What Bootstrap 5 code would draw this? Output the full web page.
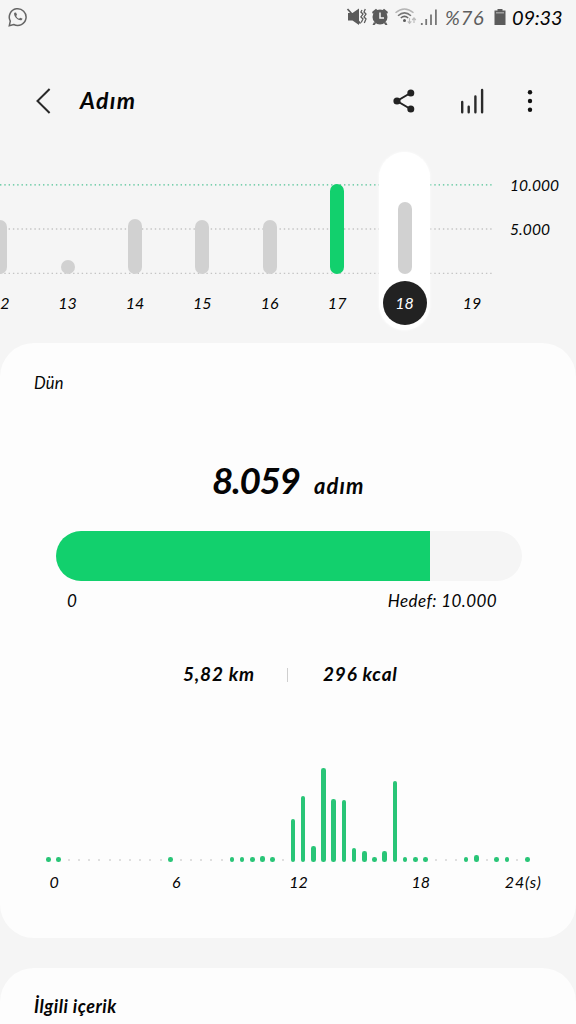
<!DOCTYPE html>
<html lang="tr">
<head>
    <meta charset="UTF-8">
    <meta name="viewport" content="width=device-width, initial-scale=1">
    <title>Adım</title>
    <link rel="stylesheet" href="https://cdn.jsdelivr.net/npm/bootstrap@5.3.0/dist/css/bootstrap.min.css">
    <style>
        body {
            background-color: #f5f5f5;
            color: #050505;
            font-family: Lato, "Open Sans", sans-serif;
            font-style: italic;
            font-size: 17px;
            line-height: 1;
            height: 1024px;
            overflow: hidden;
        }
        .status-bar { height: 36px; padding: 0 14px 3px 8px; color: #5e5e5e; font-size: 20px; }
        .status-bar .clock { color: #050505; letter-spacing: -.2px; width: 50px; margin-left: 6px; }
        .status-bar .battery-text { width: 43px; margin: 0 6px 0 3px; letter-spacing: .8px; }
        .top-bar { height: 60px; margin-top: 35px; padding: 0 32px 0 35px; }
        .top-bar h1 { font-size: 23px; font-weight: 700; margin-left: 29px; width: 64px; letter-spacing: 1.3px; }
        .icon-share { margin-right: 45px; }
        .icon-stats { margin-right: 31px; }

        .daily-chart { height: 212px; overflow: hidden; }
        .grid-lines { left: 0; top: 0; }
        .days { margin-left: -33.5px; width: 540px; }
        .day { width: 67.4px; height: 179px; margin-top: 21px; flex: none; }
        .day-inner { width: 51px; height: 178px; border-radius: 26px; }
        .day.selected .day-inner { background: #fff; box-shadow: 0 0 3px #fff; }
        .bar-area { height: 121.5px; }
        .day-bar { width: 14px; border-radius: 7px; background: #d1d1d1; }
        .day-bar.reached { background: #12d06d; }
        .day-label { width: 44px; height: 44px; margin-top: 7px; font-size: 16px; }
        .selected .day-label { background: #222; color: #fff; border-radius: 50%; }
        .scale { left: 510px; top: 46px; font-size: 15.5px; letter-spacing: .1px; line-height: 17px; }
        .scale div { margin-bottom: 27px; }

        .panel { background: #fdfdfd; border-radius: 34px; }
        .panel-today { height: 595px; padding-top: 32px; margin-bottom: 30px; }
        .panel-related { height: 56px; padding: 29px 34px 0; font-size: 18px; font-weight: 700; letter-spacing: .5px; border-radius: 34px 34px 0 0; }
        .panel-title { margin-left: 34px; font-size: 16.5px; height: 18px; letter-spacing: .2px; }
        .total { margin: 68px 0 0 212px; height: 46px; }
        .total-count { font-size: 37px; font-weight: 700; width: 102px; letter-spacing: -1.4px; }
        .total-unit { font-size: 22px; font-weight: 700; letter-spacing: 1.1px; }
        .goal { width: 466px; height: 50px; margin: 24px 0 0 56px; border-radius: 25px; background: #f5f5f5; }
        .goal .progress-bar { background: #12d06d; }
        .goal-labels { margin: 11px 79px 0 67px; height: 18px; letter-spacing: .4px; }
        .stats { margin: 54px 0 0 183px; height: 20px; font-size: 19px; font-weight: 700; letter-spacing: .8px; }
        .stats .distance { width: 104px; }
        .stats .divider { width: 1px; height: 14px; background: #cfcfcf; margin: 4px 35px 0 0; }
        .hours { height: 100px; margin: 78px 0 0 43.4px; width: 489.2px; }
        .slot { flex: 1 0 0; }
        .hour-bar { width: 4.6px; border-radius: 2.3px; background: #29c577; }
        .hour-bar.idle { width: 2px; height: 2px; background: #d4d4d4; margin-bottom: 1.4px; }
        .hour-labels { margin: 12px 0 0 -7px; font-size: 16px; }
        .hour-labels div { width: 122.2px; flex: none; }
        .hour-labels .end-label { width: 83px; letter-spacing: .8px; }
    </style>
</head>
<body>

<div class="status-bar d-flex align-items-center">
    <svg class="me-auto" width="20" height="20" viewBox="0 0 20 20" fill="none" stroke="#666" stroke-width="1.5">
        <path d="M1.3 18.7 2.3 14.1A8.4 8.4 0 1 1 5.7 17.5Z"/>
        <path d="M6.3 5.8C5 8.5 9.7 14.1 13.5 13.2L14.6 11.8 12.3 10.7 11 11.8C9.7 11.2 8.6 10 8.2 8.9L9 7.8 8 5.5Z" fill="#666" stroke="none"/>
    </svg>
    <svg width="96" height="20" viewBox="346 7 96 20">
        <g fill="#5b5b5b">
            <path d="M348 13H352.5L359 8.5V25L352.5 20.5H348Z"/>
            <path d="M347.5 9 360.5 23.5" stroke="#5b5b5b" stroke-width="1.7"/>
            <path d="M362 10 360.9 12 363 14 360.9 17 363 19 361.2 22.5M365.3 9 364 12 366 14 364 17 366 19 364.3 23" stroke="#5b5b5b" stroke-width="1.3" fill="none"/>
            <path d="M372 12 376 8.8 377.5 10.2 373 14.1ZM388 12 384 8.8 382.5 10.2 387 14.1ZM374 22 372.5 25H374.5L376 23.5ZM386 22 387.5 25H385.5L384 23.5Z"/>
            <circle cx="380" cy="17" r="7.5"/>
            <path d="M380 12.5V18H384" stroke="#f5f5f5" stroke-width="1.5" fill="none"/>
            <circle cx="404.5" cy="20.4" r="1.5"/>
        </g>
        <g fill="none" stroke-width="1.5">
            <path d="M395.5 12.8Q404.5 5.2 413.5 12.8" stroke="#b5b5b5"/>
            <path d="M398 15.7Q404.5 10 411 15.7" stroke="#777"/>
            <path d="M400.8 18Q404.5 14.7 408.2 18" stroke="#666"/>
            <path d="M409.5 18V23M407.7 21.3 409.5 23.3 411.3 21.3M414 23V18M412.2 20 414 18 415.8 20" stroke="#bcbcbc" stroke-width="1.2"/>
            <path d="M421.8 23V25M426.2 19V25M431 14.5V25M435.9 9.5V25" stroke="#777" stroke-width="1.8"/>
        </g>
    </svg>
    <span class="battery-text">%76</span>
    <svg width="12" height="18" viewBox="0 0 12 18">
        <path d="M3.5 1H8.5V2.5H11.5V17H.5V2.5H3.5Z" fill="#5b5b5b"/>
        <path d="M2 4.8H10" stroke="#aaa" stroke-width="1.3"/>
    </svg>
    <span class="clock">09:33</span>
</div>

<header class="top-bar d-flex align-items-center">
    <svg width="16" height="28" viewBox="0 0 16 28" fill="none" stroke="#292929" stroke-width="2">
        <path d="M14.6 2 2.5 14 14.6 26"/>
    </svg>
    <h1 class="mb-0 me-auto">Adım</h1>
    <svg class="icon-share" width="22" height="24" viewBox="0 0 22 24" fill="#222">
        <path d="M17.5 4 4 12 17.5 20" fill="none" stroke="#222" stroke-width="2"/>
        <circle cx="4" cy="12" r="3.6"/><circle cx="17.8" cy="4" r="3.5"/><circle cx="17.8" cy="20" r="3.5"/>
    </svg>
    <svg class="icon-stats" width="25" height="26" viewBox="0 0 25 26" stroke="#2a2a2a" stroke-width="2.4" stroke-linecap="round">
        <path d="M2.2 14V24.2M8.7 18.7V24.2M15.4 8.4V24.2M22.1 2V24.2"/>
    </svg>
    <svg width="28" height="26" viewBox="0 0 28 26" fill="#111">
        <circle cx="14" cy="4.3" r="2.2"/><circle cx="14" cy="13" r="2.2"/><circle cx="14" cy="21.7" r="2.2"/>
    </svg>
</header>

<section class="daily-chart position-relative">
    <svg class="grid-lines position-absolute" width="494" height="150" stroke-width="1.3" stroke-dasharray="1.4 2.9">
        <path d="M0 53.8H494" stroke="#4fc294"/>
        <path d="M0 98H494M0 142.3H494" stroke="#c4c4c4"/>
    </svg>
    <div id="days" class="days d-flex position-relative"></div>
    <div class="scale position-absolute">
        <div>10.000</div>
        <div>5.000</div>
    </div>
</section>

<main>
    <section class="panel panel-today">
        <div class="panel-title">Dün</div>
        <div class="total d-flex align-items-baseline">
            <span class="total-count">8.059</span>
            <span class="total-unit">adım</span>
        </div>
        <div class="goal progress">
            <div class="progress-bar" id="goalBar"></div>
        </div>
        <div class="goal-labels d-flex justify-content-between">
            <span>0</span>
            <span>Hedef: 10.000</span>
        </div>
        <div class="stats d-flex">
            <span class="distance">5,82 km</span>
            <span class="divider"></span>
            <span>296 kcal</span>
        </div>
        <div id="hours" class="hours d-flex align-items-end"></div>
        <div class="hour-labels d-flex text-center">
            <div>0</div>
            <div>6</div>
            <div>12</div>
            <div>18</div>
            <div class="end-label">24(s)</div>
        </div>
    </section>
    <section class="panel panel-related">İlgili içerik</section>
</main>

<script src="https://cdn.jsdelivr.net/npm/bootstrap@5.3.0/dist/js/bootstrap.bundle.min.js"></script>
<script>
    // bar heights in pixels, 90 = daily goal
    const days = [
        {day: 12, height: 54},
        {day: 13, height: 14},
        {day: 14, height: 54.5},
        {day: 15, height: 54},
        {day: 16, height: 54},
        {day: 17, height: 90},
        {day: 18, height: 71.5, selected: true},
        {day: 19, height: 0}
    ];

    // one value per half hour, 0 = no steps
    const hours = [
        5, 5, 0, 0, 0, 0, 0, 0, 0, 0, 0, 0,
        5, 0, 0, 0, 0, 0, 5, 5, 5, 6, 5, 0,
        43, 66, 16, 94, 63, 62, 14, 11, 5, 11, 81, 5,
        5, 5, 0, 0, 0, 5, 7, 0, 5, 5, 0, 5
    ];

    document.getElementById('days').innerHTML = days.map(d => `
        <div class="day d-flex justify-content-center ${d.selected ? 'selected' : ''}">
            <div class="day-inner d-flex flex-column align-items-center">
                <div class="bar-area d-flex align-items-end">
                    <div class="day-bar ${d.height >= 90 ? 'reached' : ''}" style="height: ${d.height}px"></div>
                </div>
                <div class="day-label d-flex align-items-center justify-content-center">${d.day}</div>
            </div>
        </div>
    `).join('');

    document.getElementById('hours').innerHTML = hours.map(h => `
        <div class="slot d-flex justify-content-center">
            ${h ? `<div class="hour-bar" style="height: ${h}px"></div>` : '<div class="hour-bar idle"></div>'}
        </div>
    `).join('');

    document.getElementById('goalBar').style.width = (374 / 466 * 100) + '%';
</script>
</body>
</html>
